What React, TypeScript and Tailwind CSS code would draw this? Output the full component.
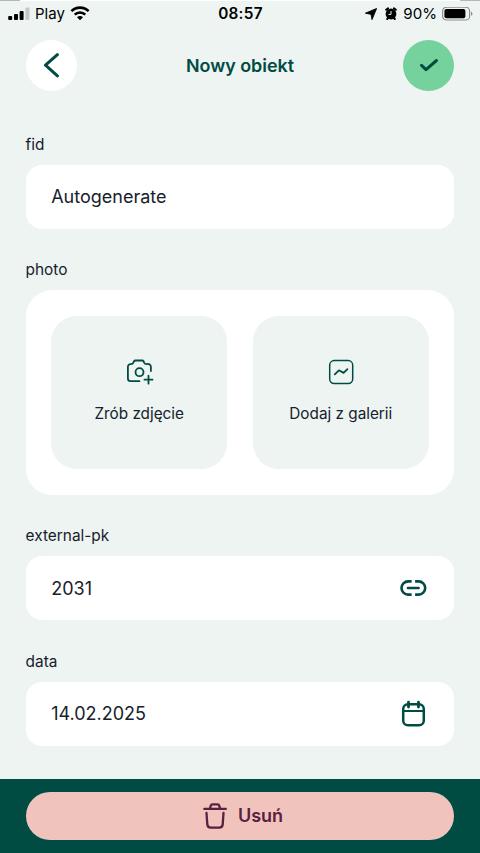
import React from "react";

function StatusBar() {
  return (
    <div className="flex h-[25px] items-center justify-between pl-2 pr-[7px] text-black">
      <div className="flex w-[150px] items-center">
        <svg width="23" height="14" viewBox="0 0 23 14" className="block">
          <rect x="0.2" y="9" width="4" height="4" rx="1" />
          <rect x="6" y="7" width="4" height="6" rx="1" />
          <rect x="11.6" y="4" width="4" height="9" rx="1" />
          <rect x="17.4" y="0.6" width="4" height="12.4" rx="1" fill="#c3c9c7" />
        </svg>
        <span className="ml-[4px] w-[30px] text-[15px] leading-5">Play</span>
        <svg width="20" height="15" viewBox="0 0 20 15" className="ml-[5px] block" fill="none" stroke="#000" strokeWidth="2.6">
          <path d="M1.4 5.2C6.2.4 13.8.4 18.6 5.2" />
          <path d="M4.7 8.6c3-2.9 7.6-2.9 10.6 0" />
          <path d="M7 11.2c1.8-1.6 4.2-1.6 6 0L10 14.3z" fill="#000" stroke="none" />
        </svg>
      </div>
      <span className="text-[15.3px] font-semibold leading-5 tracking-[0.3px]">08:57</span>
      <div className="flex w-[150px] items-center justify-end">
        <svg width="12" height="12" viewBox="0 0 12 12" className="block">
          <path d="M11.6.5 7 11.6 6 6.3.4 5.2z" stroke="#000" strokeWidth=".9" strokeLinejoin="round" />
        </svg>
        <svg width="14" height="14" viewBox="0 0 14 14" className="ml-[7px] block" fill="none" stroke="#000">
          <circle cx="7" cy="7" r="5.4" fill="#000" stroke="none" />
          <path d="M2.2 2.8 4 1.4M11.8 2.8 10 1.4M3.2 12l1-1.2M10.8 12l-1-1.2" strokeWidth="2" strokeLinecap="round" />
          <path d="M7 4v3.4H4.5" stroke="#edf4f2" strokeWidth="1" />
        </svg>
        <span className="ml-[5px] text-[15.1px] leading-5">90%</span>
        <svg width="31" height="14" viewBox="0 0 31 14" className="ml-[5px] block">
          <rect x=".6" y=".2" width="27" height="12.8" rx="3.8" fill="none" stroke="#8b908f" strokeWidth="1.2" />
          <rect x="2.4" y="1.9" width="21" height="9.4" rx="2" />
          <path d="M29 4.4c2 .8 2 3.6 0 4.4z" fill="#8b908f" />
        </svg>
      </div>
    </div>
  );
}

function Field({ label, value, icon }: { label: string; value: string; icon?: React.ReactNode }) {
  return (
    <section>
      <h2 className="h-[31px] text-[15.4px] leading-[21.8px]">{label}</h2>
      <div className="flex h-[63.8px] items-center justify-between rounded-[16px] bg-white pl-[25.6px] pr-[27px] text-[18px] leading-6">
        <span className="pt-[1px]">{value}</span>
        {icon}
      </div>
    </section>
  );
}

function PhotoButton({ label, children }: { label: string; children: React.ReactNode }) {
  return (
    <button className="flex h-[153.4px] flex-1 flex-col items-center rounded-[26px] bg-[#edf4f2] pt-[42px] text-[15.3px]">
      <svg width="30" height="28" viewBox="0 0 30 28" fill="none" stroke="#004c43" strokeWidth="1.8" strokeLinecap="round" strokeLinejoin="round">
        {children}
      </svg>
      <span className="mt-[18px] leading-5">{label}</span>
    </button>
  );
}

export default function App() {
  return (
    <div className="flex h-[853px] w-[480px] flex-col overflow-hidden bg-[#edf4f2] font-['Inter','Liberation_Sans',sans-serif] text-[#16212b]">
      <div className="flex h-px justify-between bg-white">
        <div className="w-5 bg-[#b5b8b7]" />
        <div className="w-5 bg-[#b5b8b7]" />
      </div>
      <StatusBar />
      <header className="mt-[1.7px] flex h-[75px] items-center justify-between px-[25.6px]">
        <button aria-label="Wstecz" className="flex size-[51.2px] items-center justify-center rounded-full bg-white">
          <svg width="18" height="26" viewBox="0 0 18 26" fill="none" stroke="#004c43" strokeWidth="3" strokeLinecap="round" strokeLinejoin="round">
            <path d="M15.4 2.7 3.5 13.2l11.9 10.7" />
          </svg>
        </button>
        <h1 className="pt-[1.4px] text-[17.9px] font-semibold leading-6 text-[#004c43]">Nowy obiekt</h1>
        <button aria-label="Zapisz" className="flex size-[51.2px] items-center justify-center rounded-full bg-[#75d29d]">
          <svg width="20" height="14" viewBox="0 0 20 14" fill="none" stroke="#004c43" strokeWidth="3" strokeLinecap="round" strokeLinejoin="round">
            <path d="m2.5 7.3 4.5 4.3L17.5 2.5" />
          </svg>
        </button>
      </header>
      <main className="flex flex-1 flex-col px-[25.6px] pt-[31.3px]">
        <Field label="fid" value="Autogenerate" />
        <section className="mt-[30.6px]">
          <h2 className="h-[31px] text-[15.4px] leading-[21.8px]">photo</h2>
          <div className="flex h-[204.6px] gap-[25.6px] rounded-[26px] bg-white p-[25.6px]">
            <PhotoButton label="Zrób zdjęcie">
              <path d="M15.4 23.2H6.6A2.7 2.7 0 0 1 3.9 20.5V8.8A2.7 2.7 0 0 1 6.6 6.1C8.6 6.1 9.2 5.5 9.6 4.2L9.9 3.5Q10.4 2.5 11.5 2.5h6.6q1.1 0 1.6 1l.4 1.1c.4 1 1.2 1.5 2.9 1.5a3 3 0 0 1 3.9 3V13" />
              <circle cx="15.5" cy="14.2" r="4" />
              <path d="M24.5 17.7v8M20.5 21.7h8" />
            </PhotoButton>
            <PhotoButton label="Dodaj z galerii">
              <rect x="3.7" y="2.6" width="23" height="23" rx="4.5" strokeWidth="1.5" />
              <path d="m8.8 16.3 4.1-4 4.7 2.6 3.8-3.7" />
            </PhotoButton>
          </div>
        </section>
        <div className="mt-[30.4px]">
          <Field
            label="external-pk"
            value="2031"
            icon={
              <svg width="28" height="18" viewBox="0 0 28 18" fill="none" stroke="#004c43" strokeWidth="2.6">
                <path d="M12.6 2.4H9.1a6.6 6.6 0 0 0 0 13.2h3.5M16.1 2.4h3.5a6.6 6.6 0 0 1 0 13.2h-3.5" />
                <path d="M9 9h10.6" strokeLinecap="round" />
              </svg>
            }
          />
        </div>
        <div className="mt-[30.6px]">
          <Field
            label="data"
            value="14.02.2025"
            icon={
              <svg width="28" height="28" viewBox="0 0 28 28" fill="none" stroke="#004c43" strokeWidth="2.5">
                <rect x="4.2" y="4.2" width="20.6" height="21" rx="4.8" />
                <path d="M4.3 11h20.4" strokeWidth="2" />
                <path d="M9.5 2.2V7M19.5 2.2V7" strokeWidth="2.8" strokeLinecap="round" />
              </svg>
            }
          />
        </div>
      </main>
      <footer className="h-[74px] bg-[#004c43] px-[25.6px] pt-[12.8px]">
        <button className="flex h-[48px] w-full items-center justify-center gap-[10px] rounded-full bg-[#f0c3bc] pl-[5px] text-[18px] font-semibold text-[#5a203f]">
          <svg width="26" height="28" viewBox="0 0 26 28" fill="none" stroke="#5a203f" strokeWidth="2.3" strokeLinecap="round" strokeLinejoin="round">
            <path d="M2.3 6.9h21.5M8 6.4 8.7 3.8q.4-1.4 1.8-1.4h5q1.4 0 1.8 1.4L18 6.4" />
            <path d="m4.5 11 .8 11.4q.2 3.2 3.4 3.2h8.6q3.2 0 3.4-3.2l.8-11.4" />
          </svg>
          <span className="leading-6">Usuń</span>
        </button>
      </footer>
    </div>
  );
}
